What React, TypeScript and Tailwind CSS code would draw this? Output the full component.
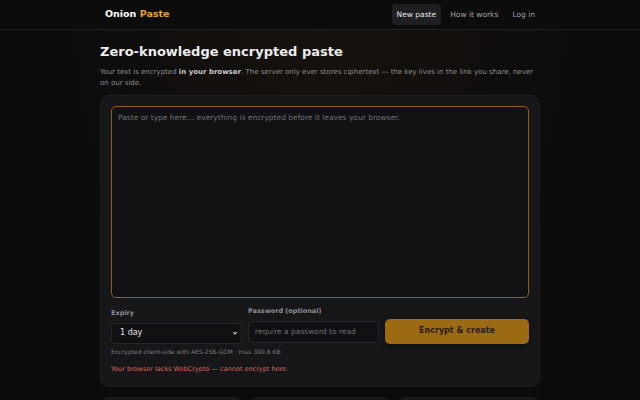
import React from 'react';

const App = () => {
  return (
    <div
      className="min-h-[400px] bg-[#0b0b0c] text-[#e4e4e7] overflow-hidden"
      style={{ fontFamily: '"DejaVu Sans", sans-serif' }}
    >
      <header className="h-[30px] border-b border-[#1f1f22] bg-[#0c0c0d]">
        <div className="w-[440px] mx-auto h-full flex items-center justify-between pl-[5px]">
          <div className="text-[9.5px] font-bold">
            <span className="text-white">Onion</span>{' '}
            <span className="text-[#e3a436]">Paste</span>
          </div>
          <nav className="flex items-center gap-[4px] text-[7.5px]">
            <span className="px-[5px] py-[5px] rounded-[4px] bg-[#1f1f22] text-[#e4e4e7]">New paste</span>
            <span className="px-[5px] py-[5px] text-[#a1a1aa]">How it works</span>
            <span className="px-[5px] py-[5px] text-[#a1a1aa]">Log in</span>
          </nav>
        </div>
      </header>

      <main className="bg-[radial-gradient(ellipse_at_top,rgba(180,110,20,0.07),transparent_65%)]">
        <div className="w-[440px] mx-auto pt-[13px]">
          <h1 className="text-[13px] font-bold text-[#ececee] leading-[18px]">Zero-knowledge encrypted paste</h1>
          <p className="mt-[6px] text-[7px] leading-[10.5px] text-[#8d8d94]">
            Your text is encrypted <b className="text-[#c8c8cc]">in your browser</b>. The server only ever stores ciphertext — the key lives in the link you share, never on our side.
          </p>

          <div className="mt-[7px] rounded-[9px] bg-[#17171a] border border-[#1e1e21] p-[10px] pb-[11px]">
            <div className="h-[192px] rounded-[5px] border border-[#8a6418] bg-[#121214] px-[6px] py-[5px]">
              <div className="text-[7.5px] text-[#6f6f76]">
                Paste or type here… everything is encrypted before it leaves your browser.
              </div>
            </div>

            <div className="mt-[9px] flex items-end gap-[6px]">
              <div className="w-[131px]">
                <div className="text-[6.5px] font-bold text-[#8d8d94] mb-[4px]">Expiry</div>
                <div className="h-[21px] rounded-[4px] border border-[#26262a] bg-[#111113] flex items-center justify-between pl-[8px] pr-[3px]">
                  <span className="text-[8px] text-[#e4e4e7]">1 day</span>
                  <svg width="6" height="6" viewBox="0 0 10 10" fill="none" stroke="#c8c8cc" strokeWidth="1.8">
                    <path d="M2 3.5l3 3 3-3" />
                  </svg>
                </div>
              </div>
              <div className="w-[131px]">
                <div className="text-[6.5px] font-bold text-[#8d8d94] mb-[4px]">Password (optional)</div>
                <div className="h-[22px] rounded-[4px] border border-[#26262a] bg-[#111113] flex items-center px-[6px] mb-[1px]">
                  <span className="text-[7.5px] text-[#6f6f76]">require a password to read</span>
                </div>
              </div>
              <div className="flex-1 h-[25px] rounded-[5px] bg-[#9c6a13] flex items-center justify-center shadow-[0_2px_6px_rgba(0,0,0,0.4)]">
                <span className="text-[8px] font-bold text-[#2a1c05]">Encrypt &amp; create</span>
              </div>
            </div>

            <div className="mt-[3px] text-[6px] text-[#7c7c83]">Encrypted client-side with AES-256-GCM · max 390.6 KB</div>
            <div className="mt-[9px] text-[6.5px] text-[#d9665e]">Your browser lacks WebCrypto — cannot encrypt here.</div>
          </div>

          <div className="mt-[10px] grid grid-cols-3 gap-[7px]">
            <div className="h-[40px] rounded-[9px] bg-[#17171a] border border-[#1e1e21]" />
            <div className="h-[40px] rounded-[9px] bg-[#17171a] border border-[#1e1e21]" />
            <div className="h-[40px] rounded-[9px] bg-[#17171a] border border-[#1e1e21]" />
          </div>
        </div>
      </main>
    </div>
  );
};

export default App;
